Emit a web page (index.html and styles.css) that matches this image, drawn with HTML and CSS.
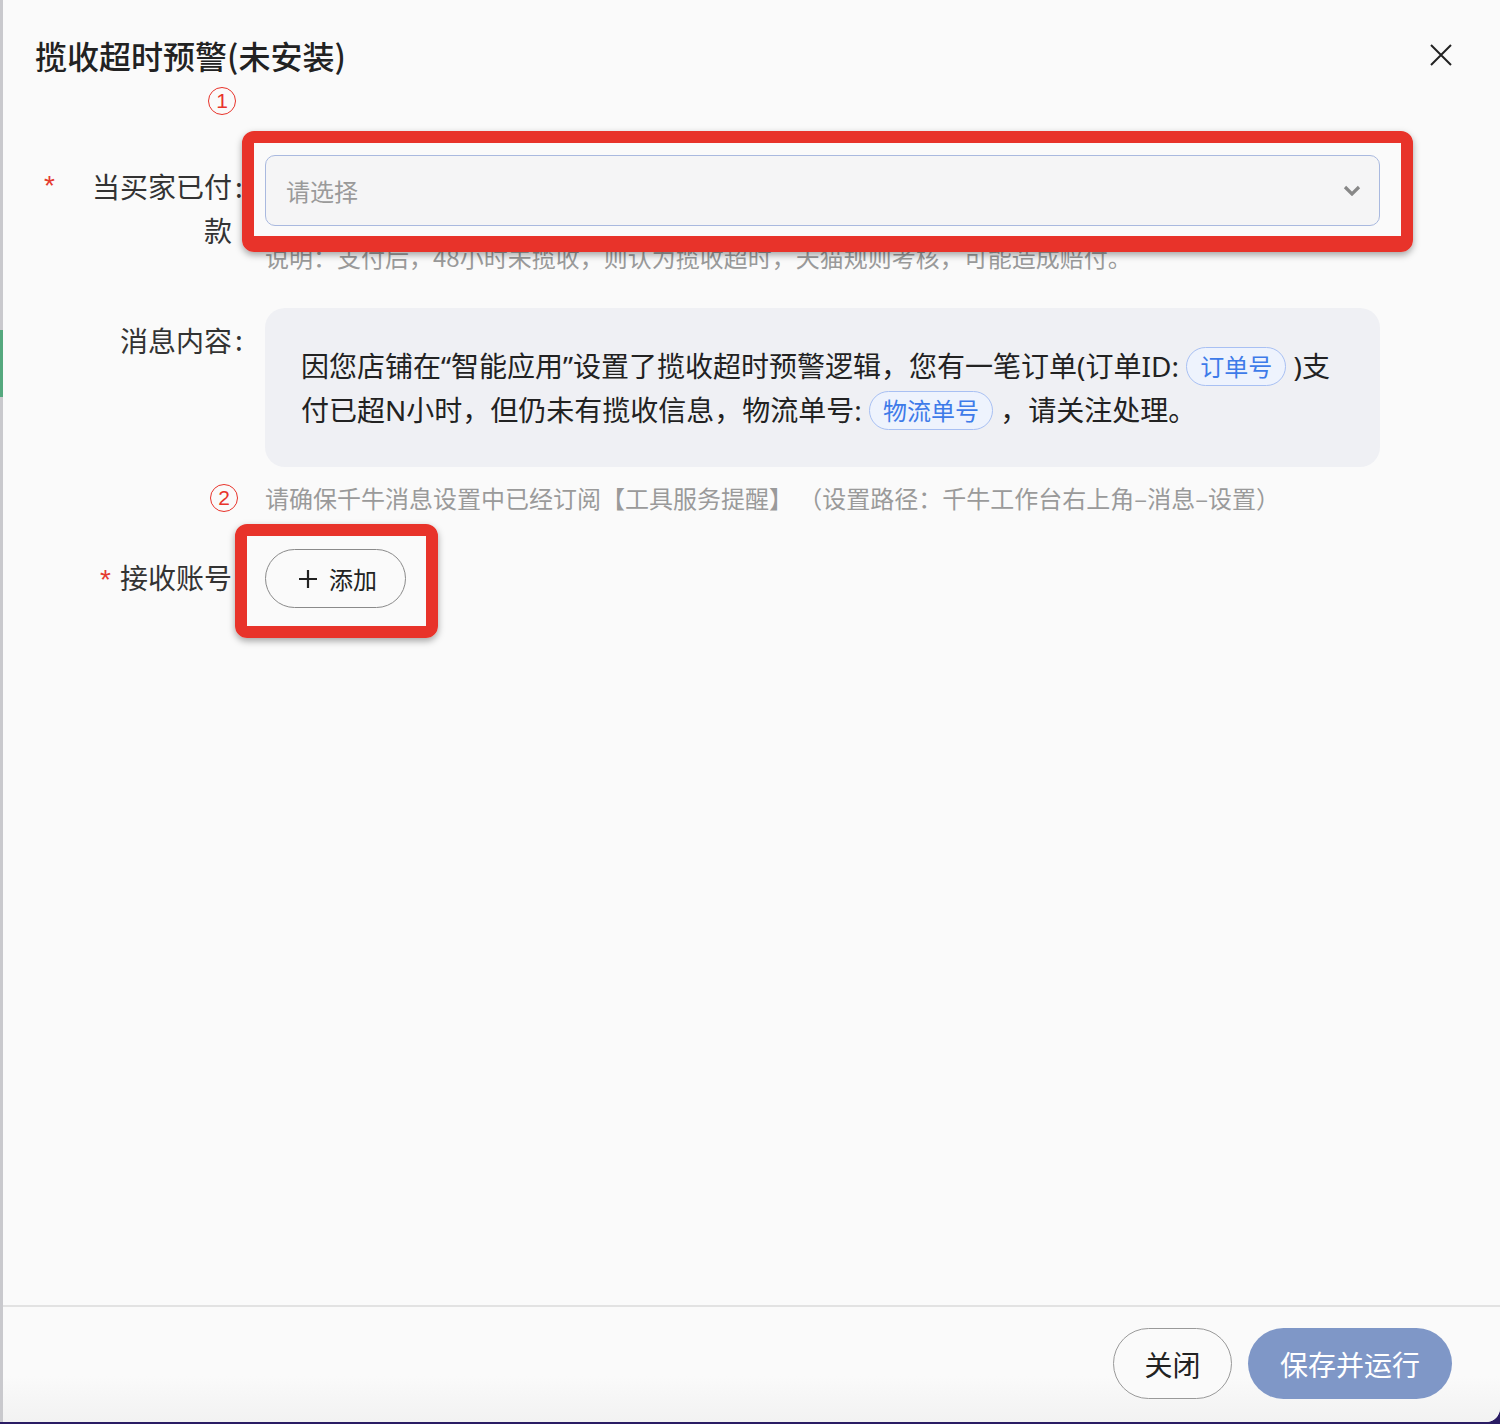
FILE: index.html
```html
<!DOCTYPE html>
<html lang="zh-CN">
<head>
<meta charset="utf-8">
<title>揽收超时预警</title>
<link rel="stylesheet" href="styles.css">
</head>
<body>
<div class="page">
  <div class="edge"><div class="edge-green"></div></div>
  <div class="dialog">
    <div class="header">
      <h1 class="title">揽收超时预警(未安装)</h1>
      <button class="close" aria-label="关闭">
        <svg width="22" height="22" viewBox="0 0 22 22"><path d="M1 1L21 21M21 1L1 21" stroke="#222" stroke-width="2" fill="none"/></svg>
      </button>
    </div>

    <div class="form">
      <div class="row row-select">
        <div class="label label-split">
          <span class="star">*</span>
          <span class="label-text narrow">当买家已付款</span>
        </div>
        <div class="colon">:</div>
        <div class="control">
          <div class="anchor">
            <span class="mark mark-1">1</span>
            <div class="select">
              <span class="placeholder">请选择</span>
              <svg class="chevron" width="18" height="11" viewBox="0 0 18 11"><path d="M2 2L9 9L16 2" stroke="#888" stroke-width="3.2" fill="none"/></svg>
            </div>
            <div class="callout callout-1"></div>
          </div>
          <div class="hint">说明：支付后，48小时未揽收，则认为揽收超时，天猫规则考核，可能造成赔付。</div>
        </div>
      </div>

      <div class="row">
        <div class="label"><span class="label-text">消息内容</span></div>
        <div class="colon">:</div>
        <div class="control">
          <div class="message">因您店铺在“智能应用”设置了揽收超时预警逻辑，您有一笔订单(订单ID: <span class="tag">订单号</span> )支<br>付已超N小时，但仍未有揽收信息，物流单号: <span class="tag">物流单号</span> ，请关注处理。</div>
          <div class="hint anchor">
            <span class="mark mark-2">2</span>
            请确保千牛消息设置中已经订阅【工具服务提醒】 （设置路径：千牛工作台右上角–消息–设置）
          </div>
        </div>
      </div>

      <div class="row row-center">
        <div class="label"><span class="star star-near">*</span><span class="label-text">接收账号</span></div>
        <div class="colon"></div>
        <div class="control">
          <div class="anchor add-wrap">
            <button class="add">
              <svg width="18" height="18" viewBox="0 0 18 18"><path d="M9 0V18M0 9H18" stroke="#222" stroke-width="2.2" fill="none"/></svg>
              <span>添加</span>
            </button>
            <div class="callout callout-2"></div>
          </div>
        </div>
      </div>
    </div>

    <div class="footer">
      <button class="btn btn-ghost">关闭</button>
      <button class="btn btn-primary">保存并运行</button>
    </div>
  </div>
</div>
</body>
</html>
```

FILE: styles.css
```css
* { box-sizing: border-box; }

html, body {
  margin: 0;
  padding: 0;
  background: #2a1c64;
}

body {
  font-family: "Noto Sans CJK SC", "Noto Sans", sans-serif;
  color: #222;
}

.page {
  display: flex;
  width: 1500px;
  height: 1422px;
}

.edge {
  width: 3px;
  flex: none;
  background: #c9c9cd;
  padding-top: 330px;
}

.edge-green {
  height: 67px;
  background: #55a87e;
}

.dialog {
  flex: 1;
  display: flex;
  flex-direction: column;
  background: #fafafa;
  border-bottom-right-radius: 14px;
  overflow: hidden;
}

.header {
  display: flex;
  justify-content: space-between;
  align-items: center;
  padding: 30px 48px 2px 32px;
  height: 82px;
}

.title {
  margin: 0;
  font-size: 32px;
  line-height: 50px;
  font-weight: 500;
  color: #222;
}

.close {
  border: 0;
  background: none;
  padding: 0;
  width: 22px;
  height: 22px;
  display: flex;
}

.form {
  display: flex;
  flex-direction: column;
  gap: 34px;
  padding: 73px 120px 0 37px;
  flex: 1;
}

.row {
  display: grid;
  grid-template-columns: 192px 33px minmax(0, 1fr);
  align-items: start;
}

.row-center {
  align-items: center;
}

.label {
  display: flex;
  justify-content: flex-end;
  align-items: baseline;
  font-size: 28px;
  line-height: 44px;
  color: #333;
  padding-top: 10px;
}

.row-select .label { padding-top: 9px; }
.row-center .label { padding-top: 0; }

.label-split {
  justify-content: space-between;
  align-items: flex-start;
}

.label-text {
  text-align: right;
}

.label-text.narrow {
  width: 140px;
}

.star {
  color: #e53a2f;
  font-family: "Liberation Sans", sans-serif;
  font-size: 28px;
  margin-left: 4px;
}

.star-near {
  margin-left: 0;
  margin-right: 9px;
}

.colon {
  font-size: 28px;
  line-height: 44px;
  color: #333;
  padding-left: 3px;
  padding-top: 9px;
}

.row-center .colon { padding-top: 0; }

.control {
  display: flex;
  flex-direction: column;
  align-items: stretch;
  min-width: 0;
}

.anchor {
  position: relative;
}

.select {
  height: 71px;
  border: 1.5px solid #a9b9df;
  border-radius: 10px;
  background: #f5f5f6;
  display: flex;
  align-items: center;
  justify-content: space-between;
  padding: 0 18px 0 20px;
}

.placeholder {
  font-size: 24px;
  color: #9a9a9a;
}

.chevron {
  display: block;
}

.hint {
  margin-top: 14px;
  font-size: 24px;
  line-height: 34px;
  color: #9a9a9a;
  white-space: nowrap;
}

.message {
  background: #eff0f4;
  border-radius: 20px;
  padding: 36px 30px 35px 36px;
  font-family: "Noto Sans", "Noto Sans CJK SC", sans-serif;
  font-size: 28px;
  line-height: 44px;
  color: #222;
  white-space: nowrap;
}

.tag {
  display: inline-block;
  height: 39px;
  line-height: 36px;
  padding: 0 13px;
  border: 1.5px solid #a8c0f3;
  border-radius: 20px;
  background: #eef3fd;
  color: #3e7be9;
  font-family: "Noto Sans CJK SC", sans-serif;
  font-size: 24px;
  vertical-align: 1px;
}

.add-wrap {
  align-self: flex-start;
}

.add {
  display: flex;
  align-items: center;
  gap: 12px;
  height: 59px;
  width: 141px;
  padding: 0 0 0 33px;
  border: 1.5px solid #8a8a8a;
  border-radius: 30px;
  background: #fafafa;
  font-family: inherit;
  font-size: 24px;
  color: #222;
}

.add svg { display: block; }

/* annotation overlays */
.callout {
  position: absolute;
  border: 12px solid #e8332a;
  border-radius: 12px;
  box-shadow: 0 3px 7px rgba(0, 0, 0, 0.35);
  pointer-events: none;
}

.callout-1 {
  left: -23px;
  top: -24px;
  right: -33px;
  bottom: -26px;
  border-bottom-width: 16px;
}

.callout-2 {
  left: -30px;
  top: -25px;
  right: -32px;
  bottom: -30px;
}

.mark {
  position: absolute;
  width: 28px;
  height: 28px;
  border: 1.8px solid #e8332a;
  border-radius: 50%;
  color: #e8332a;
  font-family: "Liberation Sans", sans-serif;
  font-size: 21px;
  line-height: 25px;
  text-align: center;
}

.mark-1 {
  left: -57px;
  top: -68px;
}

.mark-2 {
  left: -55px;
  top: 3px;
}

.footer {
  display: flex;
  justify-content: flex-end;
  gap: 16px;
  border-top: 2px solid #e2e2e2;
  padding: 21px 48px 23px 0;
  background: linear-gradient(#fafafa 60%, #f2f2f2);
}

.btn {
  height: 71px;
  border-radius: 36px;
  font-family: inherit;
  font-size: 28px;
}

.btn-ghost {
  width: 119px;
  border: 1.5px solid #999;
  background: #fafafa;
  color: #222;
}

.btn-primary {
  width: 204px;
  border: 0;
  background: #7f97c7;
  color: #fff;
}
```
